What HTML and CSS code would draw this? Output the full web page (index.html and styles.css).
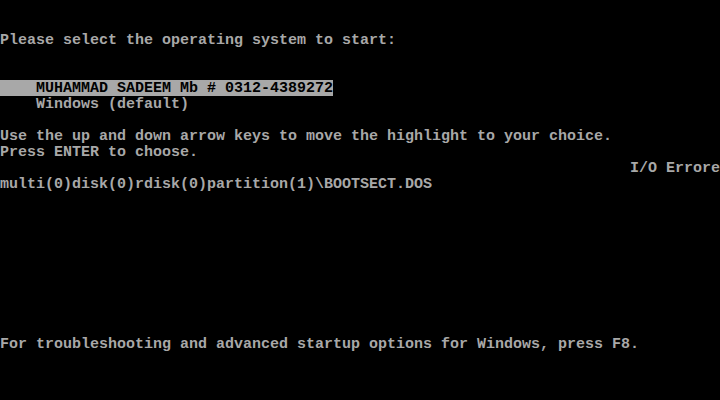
FILE: index.html
```html
<!DOCTYPE html>
<html>
<head>
<meta charset="utf-8">
<link rel="stylesheet" href="styles.css">
</head>
<body>
<main class="screen">
<div class="line"> </div>
<div class="line"> </div>
<div class="line">Please select the operating system to start:</div>
<div class="line"> </div>
<div class="line"> </div>
<div class="line"><span class="selected">    MUHAMMAD SADEEM Mb # 0312-4389272</span></div>
<div class="line">    Windows (default)</div>
<div class="line"> </div>
<div class="line">Use the up and down arrow keys to move the highlight to your choice.</div>
<div class="line">Press ENTER to choose.</div>
<div class="line">                                                                      I/O Errore</div>
<div class="line">multi(0)disk(0)rdisk(0)partition(1)\BOOTSECT.DOS</div>
<div class="line"> </div>
<div class="line"> </div>
<div class="line"> </div>
<div class="line"> </div>
<div class="line"> </div>
<div class="line"> </div>
<div class="line"> </div>
<div class="line"> </div>
<div class="line"> </div>
<div class="line">For troubleshooting and advanced startup options for Windows, press F8.</div>
</main>
</body>
</html>
```
FILE: styles.css
```css
html, body {
  margin: 0;
  padding: 0;
  background: #000;
}
.screen {
  width: 720px;
  height: 400px;
  overflow: hidden;
  background: #000;
  color: #a8a8a8;
  font-family: "Liberation Mono", monospace;
  font-size: 15px;
  font-weight: bold;
  display: flex;
  flex-direction: column;
}
.line {
  flex: none;
  height: 16px;
  line-height: 18px;
  white-space: pre;
}
.selected {
  display: inline-block;
  vertical-align: top;
  height: 16px;
  line-height: 18px;
  overflow: hidden;
  background: #a8a8a8;
  color: #000;
}
```
